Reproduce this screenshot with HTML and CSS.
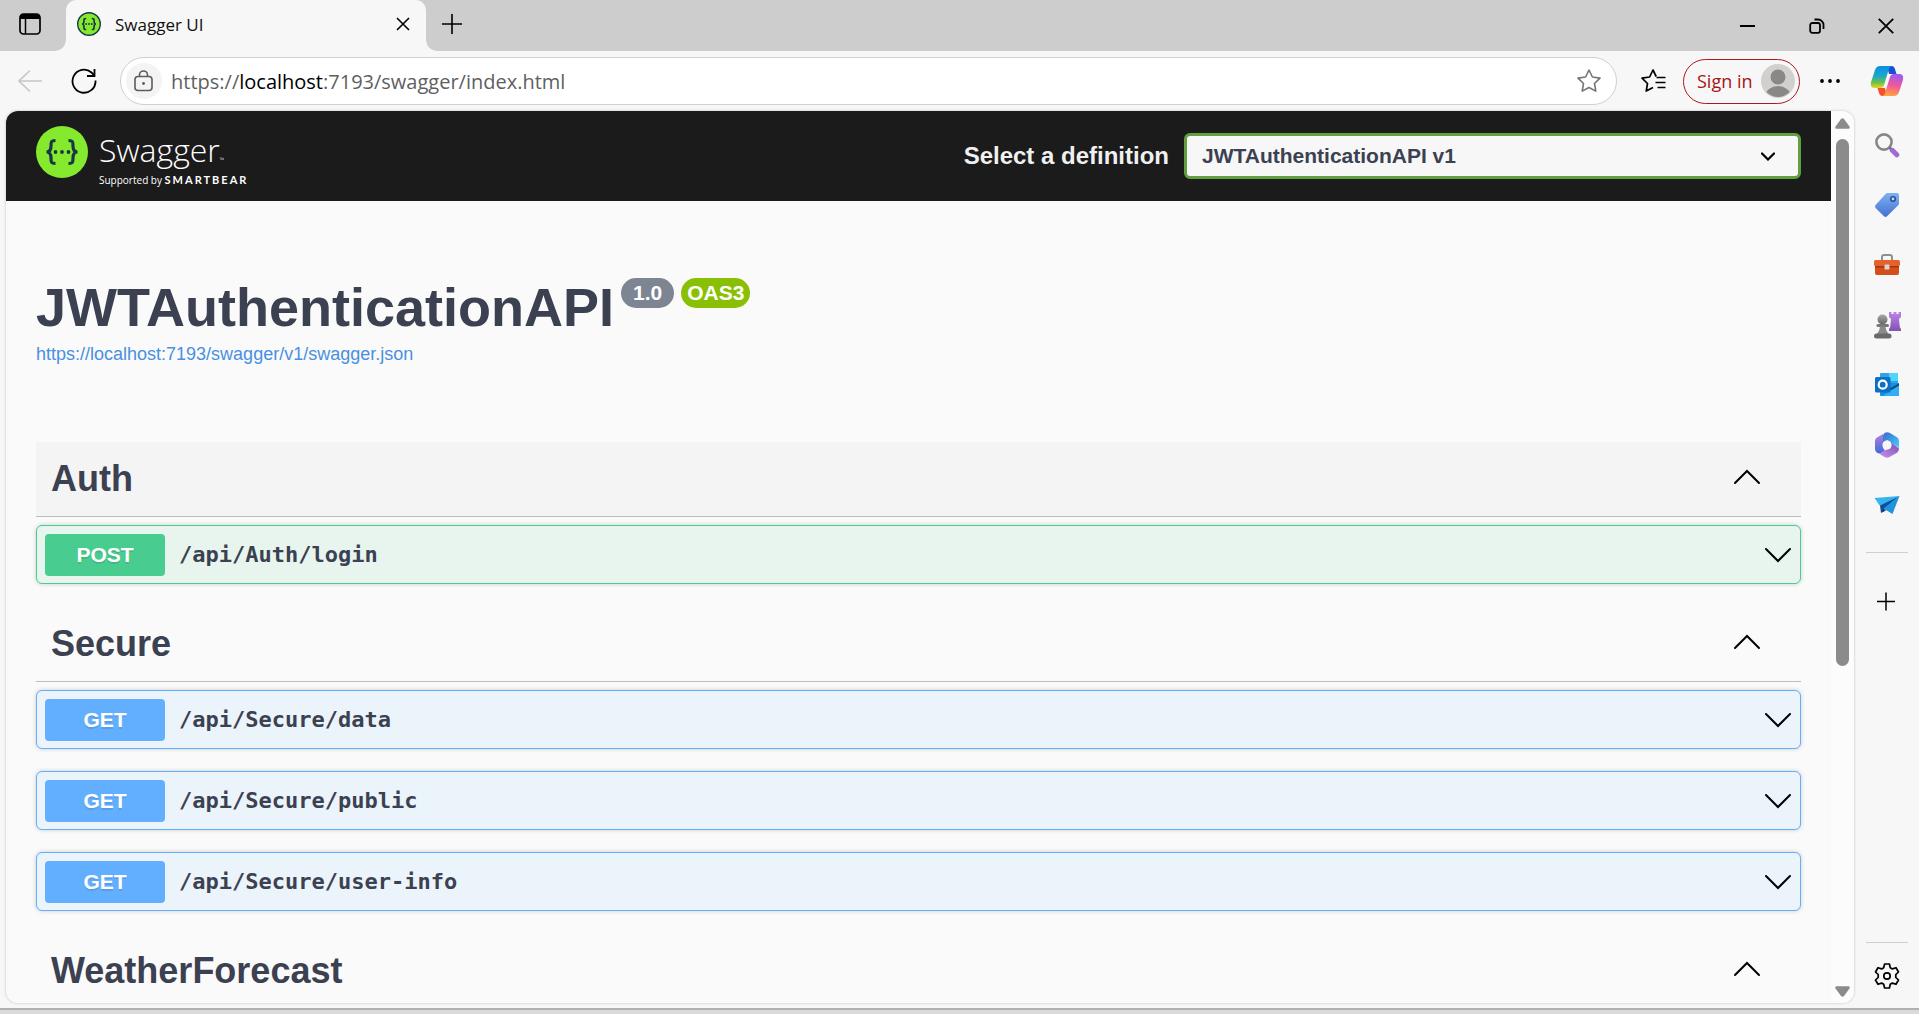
FILE: index.html
```html
<!DOCTYPE html>
<html lang="en">
<head>
<meta charset="utf-8">
<title>Swagger UI</title>
<link rel="stylesheet" href="styles.css">
</head>
<body>
<header class="tabstrip">
  <button class="icon-btn workspace" aria-label="Tab actions">
    <svg width="24" height="24" viewBox="0 0 24 24"><rect x="2" y="2" width="20" height="20" rx="3.5" fill="none" stroke="#000" stroke-width="1.7"/><path d="M2 7V5a3 3 0 0 1 3-3h14a3 3 0 0 1 3 3v2z"/><path d="M7.5 7v15" stroke="#000" stroke-width="1.5"/></svg>
  </button>
  <div class="tab">
    <svg width="24" height="24" viewBox="0 0 52 52"><circle cx="26" cy="26" r="24.5" fill="#85ea2d" stroke="#173647" stroke-width="3"/><g fill="none" stroke="#173647" stroke-width="3.6"><path d="M20 14c-5 0-5 1-5 6 0 4-1 6-4 6 3 0 4 2 4 6 0 5 0 6 5 6M32 14c5 0 5 1 5 6 0 4 1 6 4 6-3 0-4 2-4 6 0 5 0 6-5 6"/></g><g fill="#173647"><circle cx="20" cy="26" r="2"/><circle cx="26" cy="26" r="2"/><circle cx="32" cy="26" r="2"/></g></svg>
    <span class="tab-title">Swagger UI</span>
    <button class="icon-btn" aria-label="Close tab">
      <svg width="14" height="14" viewBox="0 0 14 14"><path d="M1 1l12 12M13 1L1 13" stroke="#000" stroke-width="1.6"/></svg>
    </button>
  </div>
  <button class="icon-btn new-tab" aria-label="New tab">
    <svg width="22" height="22" viewBox="0 0 22 22"><path d="M11 1v20M1 11h20" stroke="#000" stroke-width="1.6"/></svg>
  </button>
  <div class="window-controls">
    <button class="icon-btn" aria-label="Minimize"><svg width="16" height="16" viewBox="0 0 16 16"><path d="M0 8h15" stroke="#000" stroke-width="2"/></svg></button>
    <button class="icon-btn" aria-label="Restore"><svg width="16" height="16" viewBox="0 0 16 16" fill="none" stroke="#000" stroke-width="1.8"><rect x="1.2" y="5" width="9.8" height="9.8" rx="2"/><path d="M5.500 1.500H9a5.500 5.500 0 0 1 5.500 5.500v4"/></svg></button>
    <button class="icon-btn" aria-label="Close"><svg width="16" height="16" viewBox="0 0 16 16"><path d="M.8.8l14.400 14.400M15.200.8L.8 15.200" stroke="#000" stroke-width="1.8"/></svg></button>
  </div>
</header>

<nav class="toolbar">
  <button class="icon-btn" aria-label="Back"><svg width="24" height="24" viewBox="0 0 24 24" fill="none" stroke="#c6c6c6" stroke-width="1.6"><path d="M24 12H1M12 1.500L1 12l11 10.500"/></svg></button>
  <button class="icon-btn reload" aria-label="Refresh"><svg width="26" height="26" viewBox="0 0 26 26" fill="none" stroke="#000" stroke-width="1.8"><path d="M24.500 12.500A11.500 11.500 0 1 1 20.500 4.500L23.500 7.500"/><path d="M23.500 1v7H16"/></svg></button>
  <div class="address">
    <span class="lock"><svg width="20" height="22" viewBox="0 0 20 22" fill="none" stroke="#5c5c5c" stroke-width="1.6"><rect x="1" y="6.500" width="17" height="14" rx="3"/><path d="M5.500 6.500V5a4 4 0 0 1 8 0v1.500"/><circle cx="9.500" cy="13.500" r="1.400" fill="#5c5c5c" stroke="none"/></svg></span>
    <a class="url" href="#">https://<b>localhost</b>:7193/swagger/index.html</a>
    <button class="icon-btn" aria-label="Add to favorites"><svg width="26" height="26" viewBox="0 0 26 26" fill="none" stroke="#767676" stroke-width="1.600" stroke-linejoin="round"><path d="M13 2l3.400 7 7.600 1.100-5.500 5.400 1.300 7.600L13 19.500l-6.800 3.600 1.300-7.600L2 10.100 9.600 9z"/></svg></button>
  </div>
  <button class="icon-btn favorites" aria-label="Favorites"><svg width="26" height="26" viewBox="0 0 26 26" fill="none" stroke="#000" stroke-width="1.700" stroke-linejoin="round"><path d="M13 19.500l-6.800 3.600 1.300-7.600L2 10.100 9.600 9 13 2l3.200 6.500M16.500 9.500h9M15.500 14.500h10M17.500 19.500h8"/></svg></button>
  <button class="signin">Sign in
    <svg width="34" height="34" viewBox="0 0 34 34"><defs><clipPath id="av"><circle cx="17" cy="17" r="16"/></clipPath></defs><circle cx="17" cy="17" r="17" fill="#d2d0ce"/><circle cx="17" cy="13" r="7.500" fill="#8a8886"/><ellipse cx="17" cy="32" rx="12.500" ry="10" fill="#8a8886" clip-path="url(#av)"/></svg>
  </button>
  <button class="icon-btn dots" aria-label="Settings and more"><svg width="20" height="4" viewBox="0 0 20 4"><circle cx="2" cy="2" r="1.900"/><circle cx="10" cy="2" r="1.900"/><circle cx="18" cy="2" r="1.900"/></svg></button>
  <button class="icon-btn" aria-label="Copilot"><svg width="34" height="32" viewBox="0 0 34 32">
    <defs>
      <linearGradient id="c1" x1="0" y1="0" x2="0" y2="1"><stop offset="0" stop-color="#0a8fe8"/><stop offset=".45" stop-color="#1aa7c9"/><stop offset=".75" stop-color="#6cc04a"/><stop offset="1" stop-color="#f4d21f"/></linearGradient>
      <linearGradient id="c2" x1=".6" y1="0" x2=".4" y2="1"><stop offset="0" stop-color="#9a5cf5"/><stop offset=".5" stop-color="#f0569b"/><stop offset="1" stop-color="#ffa43d"/></linearGradient>
    </defs>
    <path d="M17 1h4.500c2.200 0 3 1.500 3.600 3.500L26.500 9H19z" fill="#1b4fd0"/>
    <path d="M17 31h-4.500c-2.200 0-3-1.500-3.600-3.500L7.500 23H15z" fill="#f4502a"/>
    <path d="M10.500 1H22c-2 .5-2.800 2-3.400 4l-4.400 14.500c-.7 2.300-1.700 3.500-4 3.500H4.500C1 23 .2 20 1.200 16.500L5 5c.9-2.700 2.500-4 5.500-4z" fill="url(#c1)"/>
    <path d="M23.500 31H12c2-.5 2.800-2 3.400-4l4.400-14.500c.7-2.300 1.700-3.500 4-3.500h5.700c3.500 0 4.300 3 3.300 6.500L29 27c-.9 2.700-2.500 4-5.500 4z" fill="url(#c2)"/>
  </svg></button>
</nav>

<div class="workarea">
  <div class="viewport">
    <main class="page">
      <div class="topbar">
        <a class="brand" href="#">
          <svg width="52" height="52" viewBox="0 0 52 52"><circle cx="26" cy="26" r="26" fill="#85ea2d"/><g fill="none" stroke="#173647" stroke-width="3.200"><path d="M19.500 14.500c-4.500 0-4.500 1-4.500 5.500 0 4-1 6-4.500 6 3.500 0 4.500 2 4.500 6 0 4.500 0 5.500 4.500 5.500M32.500 14.500c4.500 0 4.500 1 4.500 5.500 0 4 1 6 4.500 6-3.500 0-4.500 2-4.500 6 0 4.500 0 5.500-4.500 5.500"/></g><g fill="#173647"><circle cx="19.500" cy="26" r="1.900"/><circle cx="26" cy="26" r="1.900"/><circle cx="32.500" cy="26" r="1.900"/></g></svg>
          <span class="brand-text">
            <span class="wordmark">Swagger<small>™</small></span>
            <span class="support">Supported by <b>SMARTBEAR</b></span>
          </span>
        </a>
        <label class="definition" for="definition">Select a definition</label>
        <div class="select-wrap">
          <select id="definition"><option>JWTAuthenticationAPI v1</option></select>
          <svg class="select-arrow" width="14" height="9" viewBox="0 0 14 9"><path d="M1 1.500l6 6 6-6" fill="none" stroke="#000" stroke-width="2.200" stroke-linecap="round"/></svg>
        </div>
      </div>

      <section class="info">
        <div class="title-row">
          <h1>JWTAuthenticationAPI</h1>
          <span class="badge version">1.0</span>
          <span class="badge oas">OAS3</span>
        </div>
        <a class="spec-link" href="#">https://localhost:7193/swagger/v1/swagger.json</a>
      </section>

      <section class="group">
        <h2 class="group-head hovered">Auth <button class="icon-btn" aria-label="Collapse Auth"><svg width="28" height="16" viewBox="0 0 28 16"><path class="chevron" d="M2 14L14 2l12 12"/></svg></button></h2>
        <div class="op post"><span class="method">POST</span><span class="path">/api/Auth/login</span><button class="icon-btn" aria-label="Expand"><svg width="28" height="16" viewBox="0 0 28 16"><path class="chevron" d="M2 2l12 12L26 2"/></svg></button></div>
      </section>
      <section class="group">
        <h2 class="group-head">Secure <button class="icon-btn" aria-label="Collapse Secure"><svg width="28" height="16" viewBox="0 0 28 16"><path class="chevron" d="M2 14L14 2l12 12"/></svg></button></h2>
        <div class="op get"><span class="method">GET</span><span class="path">/api/Secure/data</span><button class="icon-btn" aria-label="Expand"><svg width="28" height="16" viewBox="0 0 28 16"><path class="chevron" d="M2 2l12 12L26 2"/></svg></button></div>
        <div class="op get"><span class="method">GET</span><span class="path">/api/Secure/public</span><button class="icon-btn" aria-label="Expand"><svg width="28" height="16" viewBox="0 0 28 16"><path class="chevron" d="M2 2l12 12L26 2"/></svg></button></div>
        <div class="op get"><span class="method">GET</span><span class="path">/api/Secure/user-info</span><button class="icon-btn" aria-label="Expand"><svg width="28" height="16" viewBox="0 0 28 16"><path class="chevron" d="M2 2l12 12L26 2"/></svg></button></div>
      </section>
      <section class="group">
        <h2 class="group-head">WeatherForecast <button class="icon-btn" aria-label="Collapse WeatherForecast"><svg width="28" height="16" viewBox="0 0 28 16"><path class="chevron" d="M2 14L14 2l12 12"/></svg></button></h2>
      </section>
    </main>
    <div class="scrollbar">
      <svg width="15" height="11" viewBox="0 0 15 11"><path d="M6 1q1.500-1.500 3 0l5.500 7.500q.8 2.300-1 2.300h-12q-1.800 0-1-2.300z" fill="#8b8b8b"/></svg>
      <div class="track"><div class="thumb"></div></div>
      <svg width="15" height="11" viewBox="0 0 15 11"><path d="M6 10q1.500 1.500 3 0l5.500-7.500Q15.300.2 13.500.2h-12Q-.3.2.5 2.500z" fill="#8b8b8b"/></svg>
    </div>
  </div>

  <aside class="sidebar">
    <button class="icon-btn" aria-label="Search"><svg width="26" height="26" viewBox="0 0 26 26"><circle cx="10" cy="10" r="7.600" fill="none" stroke="#868686" stroke-width="2.600"/><path d="M15.500 15.500l3 3" stroke="#6b6b6b" stroke-width="2.600"/><path d="M18.300 18.300l4.500 4.500" stroke="#a06bd0" stroke-width="5" stroke-linecap="round"/></svg></button>
    <button class="icon-btn" aria-label="Shopping"><svg width="26" height="26" viewBox="0 0 26 26"><defs><linearGradient id="t1" x1="0" y1="0" x2="0" y2="1"><stop offset="0" stop-color="#7db2f4"/><stop offset="1" stop-color="#4470d0"/></linearGradient></defs><path d="M13.500 1H23q2 0 2 2v8.500q0 1-.8 1.800L13 24.300q-1.500 1.200-3 0l-8.400-8.400q-1.200-1.500 0-3L11.800 1.800Q12.500 1 13.500 1z" fill="url(#t1)"/><circle cx="19" cy="7" r="2.200" fill="#c8ddfa" stroke="#2b4a94" stroke-width="1.600"/></svg></button>
    <button class="icon-btn" aria-label="Tools"><svg width="28" height="26" viewBox="0 0 28 26"><path d="M9 8V5q0-2 2-2h6q2 0 2 2v3" fill="none" stroke="#8f8f8f" stroke-width="2"/><path d="M2 12h24v9q0 2-2 2H4q-2 0-2-2z" fill="#d44e1a"/><rect x="1" y="8" width="26" height="6" rx="1.500" fill="#e5622c"/><path d="M2 14h24v1.500H2z" fill="#a9330c"/><rect x="11.500" y="12.500" width="5" height="5" rx="1" fill="#d5d5d5"/></svg></button>
    <button class="icon-btn" aria-label="Games"><svg width="28" height="28" viewBox="0 0 28 28"><defs><linearGradient id="g1" x1="0" y1="0" x2="0" y2="1"><stop offset="0" stop-color="#a9a9a9"/><stop offset="1" stop-color="#666"/></linearGradient><linearGradient id="g2" x1="0" y1="0" x2="0" y2="1"><stop offset="0" stop-color="#bd86e6"/><stop offset="1" stop-color="#8053b5"/></linearGradient></defs><path d="M16 1h2.500v2h2V1h3v2h2V1H28v5l-2 2 .8 8 1.200 2v2H16v-2l1.200-2L18 8l-2-2z" fill="url(#g2)"/><circle cx="9.500" cy="8.500" r="5" fill="url(#g1)"/><rect x="3.500" y="13" width="12.500" height="3" rx="1.500" fill="#777"/><path d="M7 15.500h5.500q0 4 3 7.500H4q3-3.500 3-7.500z" fill="#8a8a8a"/><rect x="1" y="22.500" width="17.500" height="5" rx="2.500" fill="#6a6a6a"/></svg></button>
    <button class="icon-btn" aria-label="Outlook"><svg width="26" height="26" viewBox="0 0 26 26"><path d="M7 1h16q1 0 1 1v10H6V2q0-1 1-1z" fill="#2aa5e8"/><path d="M15 1h8q1 0 1 1v7h-9z" fill="#50d4fb"/><path d="M6 11h19v12q0 1-1 1H7q-1 0-1-1z" fill="#1590df"/><path d="M25 11.500v12L15 17z" fill="#123f7c"/><path d="M25 13.500V23q0 1-1 1H9l7.500-5.500z" fill="#2fb0f0"/><rect x="1" y="5" width="15.500" height="15.500" rx="1.500" fill="#0b6fc6"/><circle cx="8.700" cy="12.700" r="4" fill="none" stroke="#fff" stroke-width="2.200"/></svg></button>
    <button class="icon-btn" aria-label="Microsoft 365"><svg width="26" height="28" viewBox="0 0 26 28"><defs><linearGradient id="m1" x1="0" y1="0" x2="0" y2="1"><stop offset="0" stop-color="#b47ce0"/><stop offset="1" stop-color="#3c6ed8"/></linearGradient><linearGradient id="m2" x1="0" y1="0" x2="1" y2="1"><stop offset="0" stop-color="#3766d2"/><stop offset="1" stop-color="#49d3f8"/></linearGradient><linearGradient id="m3" x1="0" y1="1" x2="1" y2="0"><stop offset="0" stop-color="#cf92ef"/><stop offset="1" stop-color="#7950b0"/></linearGradient></defs><path d="M9 3L3 6.500Q1 7.700 1 10v8q0 2.500 2 3.700 2.500 1.200 4.500 0l3.500-2-2-3z" fill="url(#m1)"/><path d="M9 16V5q0-2 2-3.200 2-1.300 4.500 0l7.500 4.500Q25 7.500 25 10v7L16.500 11.500 13 9z" fill="url(#m2)"/><path d="M25 17.500q0 3-2 4.300L15.500 26q-2.500 1.300-5 0L4 22q2 .6 4-.7l9-5.300V11.500z" fill="url(#m3)"/><circle cx="13" cy="14" r="4.600" fill="#f7f7f7"/></svg></button>
    <button class="icon-btn" aria-label="Drop"><svg width="26" height="22" viewBox="0 0 26 22"><path d="M.5 4L25.500 2 6 12z" fill="#36b4f0"/><path d="M6 11.500L25.500 2 11 14l-4 5z" fill="#0c4f9c"/><path d="M25.500 2L18.500 20 9.500 14.500z" fill="#1d93e0"/><path d="M7 19l2.500-4.500 2.500 2z" fill="#123a70"/></svg></button>
    <hr>
    <button class="icon-btn" aria-label="Customize"><svg width="26" height="26" viewBox="0 0 26 26"><path d="M12 5.500v18M3 14.500h18" stroke="#000" stroke-width="1.500"/></svg></button>
    <div class="sidebar-foot">
      <hr>
      <button class="icon-btn" aria-label="Settings"><svg width="26" height="26" viewBox="0 0 26 26" fill="none" stroke="#000" stroke-width="1.700" stroke-linejoin="round"><path d="M10.600 1h4.800l.9 3.700 2.100 1.200 3.600-1.200 2.500 4.300-2.700 2.500v3l2.700 2.500-2.500 4.300-3.600-1.200-2.100 1.200-.9 3.700h-4.800l-.9-3.700-2.100-1.200L4 21.300 1.500 17l2.700-2.500v-3L1.500 9 4 4.700l3.600 1.200 2.100-1.200z"/><circle cx="13" cy="13" r="3.200"/></svg></button>
    </div>
  </aside>
</div>
<footer class="desk-edge"></footer>
</body>
</html>
```
FILE: styles.css
```css
* { box-sizing: border-box; }

body {
  margin: 0;
  height: 100vh;
  display: flex;
  flex-direction: column;
  overflow: hidden;
  background: #f7f7f7;
  font-family: "Liberation Sans", Arial, sans-serif;
  color: #3b4151;
}

svg { display: block; flex: none; }

.icon-btn {
  display: flex;
  align-items: center;
  justify-content: center;
  padding: 0;
  border: 0;
  background: none;
  flex: none;
}

/* Tab strip */
.tabstrip {
  display: flex;
  align-items: stretch;
  height: 51px;
  flex: none;
  background: #cdcdcd;
  font-family: "Open Sans", "Noto Sans", sans-serif;
}
.workspace { width: 66px; padding-right: 6px; padding-bottom: 3px; }
.tab {
  position: relative;
  width: 360px;
  display: flex;
  align-items: center;
  gap: 14px;
  padding: 0 16px 3px 11px;
  background: #f7f7f7;
  border-radius: 10px 10px 0 0;
}
.tab::before,
.tab::after {
  content: "";
  position: absolute;
  bottom: 0;
  width: 10px;
  height: 10px;
}
.tab::before { left: -10px; background: radial-gradient(circle at 0 0, #cdcdcd 9px, #f7f7f7 10px); }
.tab::after { right: -10px; background: radial-gradient(circle at 100% 0, #cdcdcd 9px, #f7f7f7 10px); }
.tab-title { flex: 1; font-size: 17px; color: #111; }
.new-tab { width: 52px; padding-bottom: 4px; }
.window-controls {
  margin-left: auto;
  display: flex;
  align-items: center;
  gap: 53px;
  padding-right: 25px;
}

/* Toolbar */
.toolbar {
  display: flex;
  align-items: center;
  height: 60px;
  flex: none;
  padding: 0 15px 0 18px;
  font-family: "Open Sans", "Noto Sans", sans-serif;
}
.reload { margin: 0 23px 0 29px; }
.address {
  flex: 1;
  display: flex;
  align-items: center;
  height: 48px;
  padding: 0 14px 0 5px;
  border: 1px solid #cfcfcf;
  border-radius: 24px;
  background: #fff;
}
.lock {
  display: flex;
  align-items: center;
  justify-content: center;
  width: 36px;
  height: 36px;
  border-radius: 50%;
  background: #f4f4f4;
}
.url {
  flex: 1;
  margin-left: 9px;
  font-size: 20px;
  color: #5f5f5f;
  text-decoration: none;
}
.url b { font-weight: 400; color: #000; }
.favorites { margin: 0 17px 0 23px; }
.signin {
  display: flex;
  align-items: center;
  justify-content: space-between;
  width: 117px;
  height: 45px;
  padding: 0 4px 0 13px;
  border: 1px solid #b01818;
  border-radius: 23px;
  background: none;
  font-family: inherit;
  font-size: 18px;
  color: #a51414;
}
.dots { margin: 0 30px 0 20px; }

/* Page and sidebar */
.workarea { flex: 1; display: flex; min-height: 0; }
.viewport {
  flex: 1;
  display: flex;
  margin: 0 0 5px 6px;
  border-radius: 12px;
  overflow: hidden;
  background: #fafafa;
  box-shadow: 0 0 2px 1px #dcdcdc;
}
.page { flex: 1; overflow: hidden; }
.scrollbar {
  width: 23px;
  display: flex;
  flex-direction: column;
  align-items: center;
  gap: 10px;
  padding: 7px 0 6px;
  background: #fcfcfc;
}
.track { flex: 1; width: 13px; }
.thumb { height: 63%; border-radius: 7px; background: #8b8b8b; }

.topbar {
  display: flex;
  align-items: center;
  height: 90px;
  padding: 0 30px;
  background: #1b1b1b;
}
.brand {
  display: flex;
  align-items: flex-start;
  gap: 11px;
  height: 60px;
  margin-right: auto;
  color: #fff;
  text-decoration: none;
  font-family: "Open Sans", "Noto Sans", sans-serif;
}
.brand-text { display: flex; flex-direction: column; }
.wordmark { font-size: 32px; font-weight: 300; line-height: 48px; }
.wordmark small { font-size: 6px; line-height: 6px; }
.support { font-size: 10px; line-height: 12px; }
.support b { font-size: 11px; font-weight: 700; letter-spacing: 2px; font-family: Lato, sans-serif; }
.definition { margin-right: 15px; font-size: 24px; font-weight: 700; color: #f0f0f0; }
.select-wrap { position: relative; width: 617px; }
.select-wrap select {
  appearance: none;
  display: block;
  width: 100%;
  height: 46px;
  padding: 0 15px 2px;
  border: 3px solid #62a03f;
  border-radius: 6px;
  background: #f7f7f7;
  color: #3b4151;
  font: 700 21px "Liberation Sans", Arial, sans-serif;
}
.select-arrow { position: absolute; right: 26px; top: 19px; }

.info { margin: 75px 30px 76px; }
.title-row { display: flex; align-items: flex-start; gap: 7px; }
h1 { margin: 0; font-size: 54px; line-height: 62px; }
.badge {
  margin-top: 2px;
  padding: 0 6px;
  border-radius: 15px;
  font-size: 21px;
  line-height: 30px;
  font-weight: 700;
  color: #fff;
}
.version { padding: 0 12px; background: #7d8492; }
.oas { background: #89bf04; }
.spec-link {
  display: block;
  margin-top: 4px;
  font-size: 18px;
  line-height: 24px;
  color: #4990e2;
  text-decoration: none;
}

.group { margin: 0 30px 23px; }
.group-head {
  display: flex;
  align-items: center;
  justify-content: space-between;
  height: 75px;
  margin: 0 0 8px;
  padding: 0 40px 0 15px;
  border-bottom: 1px solid #bcbdbf;
  font-size: 36px;
}
.group-head .icon-btn { padding-bottom: 4px; }
.hovered { background: #f4f4f4; }
.chevron { fill: none; stroke: #000; stroke-width: 2; stroke-linecap: round; }
.op {
  display: flex;
  align-items: center;
  height: 59px;
  padding: 0 8px;
  border: 1px solid;
  border-radius: 6px;
  box-shadow: 0 0 4px rgba(0, 0, 0, .19);
}
.op + .op { margin-top: 22px; }
.post { border-color: #49cc90; background: #e7f5ee; }
.get { border-color: #61affe; background: #ebf3fb; }
.method {
  width: 120px;
  border-radius: 4px;
  font-size: 21px;
  line-height: 42px;
  font-weight: 700;
  text-align: center;
  color: #fff;
  text-shadow: 0 2px 0 rgba(0, 0, 0, .1);
}
.post .method { background: #49cc90; }
.get .method { background: #61affe; }
.path {
  flex: 1;
  margin-left: 14px;
  font: 700 22px "DejaVu Sans Mono", monospace;
}

.sidebar {
  width: 65px;
  display: flex;
  flex-direction: column;
  align-items: center;
  gap: 34px;
  padding: 21px 0 19px;
}
.sidebar > .icon-btn { height: 26px; }
.sidebar hr { width: 42px; height: 1px; margin: 0; border: 0; background: #cfcfcf; }
.sidebar-foot {
  display: flex;
  flex-direction: column;
  align-items: center;
  gap: 20px;
  margin-top: auto;
}

.desk-edge {
  height: 6px;
  flex: none;
  border-top: 2px solid #b0b0b0;
  background: #dadada;
}
```
